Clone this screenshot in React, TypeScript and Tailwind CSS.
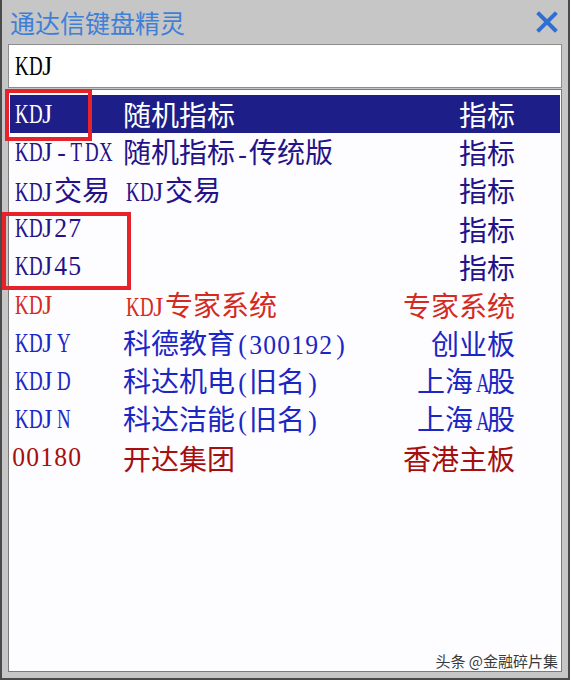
import React from 'react';

type Row = { code: string; name: string; kind: string; color: string };

const ROWS: Row[] = [
  { code: 'KDJ', name: '随机指标', kind: '指标', color: 'text-white' },
  { code: 'KDJ-TDX', name: '随机指标-传统版', kind: '指标', color: 'text-[#24128a]' },
  { code: 'KDJ交易', name: 'KDJ交易', kind: '指标', color: 'text-[#24128a]' },
  { code: 'KDJ27', name: '', kind: '指标', color: 'text-[#24128a]' },
  { code: 'KDJ45', name: '', kind: '指标', color: 'text-[#24128a]' },
  { code: 'KDJ', name: 'KDJ专家系统', kind: '专家系统', color: 'text-[#d42a22]' },
  { code: 'KDJY', name: '科德教育(300192)', kind: '创业板', color: 'text-[#1b27c4]' },
  { code: 'KDJD', name: '科达机电(旧名)', kind: '上海A股', color: 'text-[#1b27c4]' },
  { code: 'KDJN', name: '科达洁能(旧名)', kind: '上海A股', color: 'text-[#1b27c4]' },
  { code: '00180', name: '开达集团', kind: '香港主板', color: 'text-[#a50f0f]' },
];

// wide capitals need squeezing into a half-width cell
const WIDE = /[A-HK-Z]/;

// half-width cell, serif glyph like the old bitmap font
function Half({ ch }: { ch: string }) {
  return (
    <span className="inline-block w-[14px] text-center">
      <span
        className={`inline-block font-['Liberation_Serif',serif] text-[27px] ${WIDE.test(ch) ? 'scale-x-[0.7]' : 'scale-x-[0.95]'}`}
      >
        {ch}
      </span>
    </span>
  );
}

// ascii runs get half-width cells, the rest the CJK face
function Mixed({ text }: { text: string }) {
  const parts = text.split(/([\x20-\x7e]+)/).filter((p) => p !== '');
  return (
    <>
      {parts.map((p, i) =>
        /^[\x20-\x7e]+$/.test(p) ? (
          <span key={i}>
            {p.split('').map((c, j) => (
              <Half key={j} ch={c} />
            ))}
          </span>
        ) : (
          <span key={i} className="font-['Noto_Sans_CJK_SC',sans-serif] text-[28px]">
            {p}
          </span>
        ),
      )}
    </>
  );
}

export default function App() {
  return (
    <div className="relative w-[570px] h-[680px] bg-[#c6c6c6] border-l-2 border-r-2 border-b-2 border-[#4a4a4a] flex flex-col overflow-hidden">
      {/* Title bar */}
      <div className="h-[44px] flex items-center justify-between pl-[8px] pr-[8px] shrink-0">
        <span className="font-['Noto_Sans_CJK_SC',sans-serif] text-[25px] leading-none text-[#3f7fd6]">
          通达信键盘精灵
        </span>
        <svg width="22" height="22" viewBox="0 0 22 22" className="mr-[2px]">
          <path d="M3 3 L19 19 M19 3 L3 19" stroke="#2f6fd2" strokeWidth="4" strokeLinecap="square" />
        </svg>
      </div>

      {/* Search input */}
      <div className="mx-[6px] h-[44px] border border-[#8c8c8c] bg-white flex items-center pl-[3px] shrink-0 text-black leading-none">
        <Mixed text="KDJ" />
      </div>

      {/* Result list */}
      <div className="relative flex-1 mx-[6px] mt-[1px] mb-[6px] border border-[#7a7a7a] bg-[#fdfcfe] pt-[5px] px-[1px]">
        {ROWS.map((r, i) => (
          <div
            key={i}
            className={`h-[38.2px] flex items-center leading-none ${r.color} ${i === 0 ? 'bg-[#1e1e88]' : ''}`}
          >
            <div className="w-[113px] pl-[2px] whitespace-nowrap">
              <Mixed text={r.code} />
            </div>
            <div className="flex-1 whitespace-nowrap">
              <Mixed text={r.name} />
            </div>
            <div className="pr-[45px] whitespace-nowrap">
              <Mixed text={r.kind} />
            </div>
          </div>
        ))}

        <div className="absolute right-[3px] bottom-[3px] font-['Noto_Sans_CJK_SC',sans-serif] text-[15px] leading-none text-[#3a3a3a] [text-shadow:0_0_1px_#fff,1px_1px_0_#fff]">
          头条 @金融碎片集
        </div>
      </div>

      {/* annotation boxes */}
      <div className="absolute left-[3px] top-[89px] w-[87px] h-[52px] border-[4px] border-[#e6222a]" />
      <div className="absolute left-0 top-[212px] w-[129px] h-[78px] border-[4px] border-[#e6222a]" />
    </div>
  );
}
